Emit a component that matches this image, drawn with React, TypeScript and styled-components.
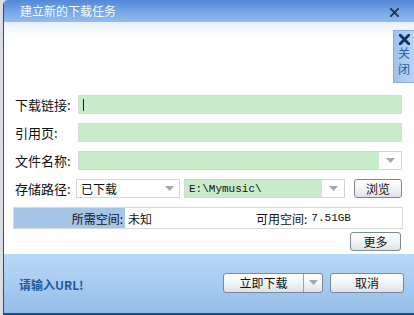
import React from 'react';
import styled, { createGlobalStyle } from 'styled-components';

const GlobalStyle = createGlobalStyle`
  html, body {
    margin: 0;
    padding: 0;
    background: #d9dee4;
    width: 414px;
    height: 315px;
    overflow: hidden;
  }
  * {
    box-sizing: border-box;
  }
`;

const cjk = `"Noto Sans CJK SC", "Liberation Sans", sans-serif`;
const mono = `"Liberation Mono", "DejaVu Sans Mono", monospace`;

function Arrow() {
  return (
    <svg width="9" height="5" viewBox="0 0 9 5">
      <path d="M0 0 H9 L4.5 5 Z" fill="#a3a7ad" />
    </svg>
  );
}

function CloseMark({ size, color, weight }: { size: number; color: string; weight: number }) {
  return (
    <svg width={size} height={size} viewBox="0 0 10 10">
      <path d="M1 1 L9 9 M9 1 L1 9" stroke={color} strokeWidth={weight} strokeLinecap="square" />
    </svg>
  );
}

export default function App() {
  return (
    <>
      <GlobalStyle />
      <Dialog>
        <TitleBar>
          <Title>建立新的下载任务</Title>
          <TitleClose>
            <CloseMark size={9} color="#1d2f4e" weight={2} />
          </TitleClose>
        </TitleBar>
        <Body>
          <SideTab>
            <CloseMark size={11} color="#13335f" weight={2.6} />
            <SideText>关</SideText>
            <SideText>闭</SideText>
          </SideTab>
          <Form>
            <Row>
              <Label>下载链接:</Label>
              <Field>
                <Caret />
              </Field>
            </Row>
            <Row>
              <Label>引用页:</Label>
              <Field />
            </Row>
            <Row>
              <Label>文件名称:</Label>
              <Combo>
                <Field />
                <DropBtn>
                  <Arrow />
                </DropBtn>
              </Combo>
            </Row>
            <Row>
              <Label>存储路径:</Label>
              <PathLine>
                <Select>
                  <SelectText>已下载</SelectText>
                  <Arrow />
                </Select>
                <Combo>
                  <Field>
                    <PathText>E:\Mymusic\</PathText>
                  </Field>
                  <DropBtn>
                    <Arrow />
                  </DropBtn>
                </Combo>
                <Button $w={48}>浏览</Button>
              </PathLine>
            </Row>
            <InfoBar>
              <InfoKey>所需空间:</InfoKey>
              <InfoValue>未知</InfoValue>
              <InfoFree>
                可用空间: <Mono>7.51GB</Mono>
              </InfoFree>
            </InfoBar>
            <MoreRow>
              <Rule />
              <Button $w={51}>更多</Button>
            </MoreRow>
          </Form>
        </Body>
        <Footer>
          <Hint>请输入URL!</Hint>
          <Actions>
            <SplitButton>
              <SplitMain>立即下载</SplitMain>
              <SplitArrow>
                <Arrow />
              </SplitArrow>
            </SplitButton>
            <Button $w={74} $h={20}>取消</Button>
          </Actions>
        </Footer>
      </Dialog>
    </>
  );
}

const Dialog = styled.div`
  margin-left: 3px;
  width: 411px;
  height: 315px;
  display: flex;
  flex-direction: column;
  border-left: 1px solid #274f86;
  border-bottom: 2px solid #1c4c8c;
  border-top-left-radius: 5px;
  overflow: hidden;
  background: #fff;
  font-family: ${cjk};
  font-size: 12px;
  color: #111;
`;

const TitleBar = styled.div`
  height: 22px;
  flex-shrink: 0;
  display: flex;
  align-items: center;
  justify-content: space-between;
  padding: 0 15px 0 16px;
  background: linear-gradient(#5488d6, #7aaae6 60%, #92bdf0);
`;

const Title = styled.div`
  color: #f4f8ff;
  font-size: 12px;
  line-height: 12px;
`;

const TitleClose = styled.div`
  display: flex;
  align-items: center;
  margin-top: 2px;
`;

const Body = styled.div`
  position: relative;
  height: 232px;
  flex-shrink: 0;
  padding: 73px 12px 0 12px;
  background: linear-gradient(#e6effa, #ffffff 14px);
`;

const SideTab = styled.div`
  position: absolute;
  right: 0;
  top: 8px;
  width: 21px;
  height: 53px;
  display: flex;
  flex-direction: column;
  align-items: center;
  padding-top: 3px;
  background: linear-gradient(90deg, #9ec3ee, #b7d4f4);
  border: 1px solid #86b0e2;
  border-right: none;
`;

const SideText = styled.span`
  color: #2a5d9f;
  font-size: 12px;
  line-height: 16px;
`;

const Form = styled.div`
  display: flex;
  flex-direction: column;
  gap: 9px;
`;

const Row = styled.div`
  display: grid;
  grid-template-columns: 62px 1fr;
  align-items: center;
  height: 19px;
`;

const Label = styled.div`
  font-size: 13px;
  color: #111;
  white-space: nowrap;
  margin-left: -1px;
`;

const Field = styled.div`
  flex: 1;
  height: 19px;
  display: flex;
  align-items: center;
  padding-left: 4px;
  background: #c8ebca;
  border: 1px solid #d6dcd6;
`;

const Caret = styled.div`
  width: 1px;
  height: 12px;
  background: #222;
`;

const Combo = styled.div`
  display: flex;
  height: 19px;
  border: 1px solid #d2d6da;
  flex: 1;
  & > ${Field} {
    border: none;
    height: 17px;
  }
`;

const DropBtn = styled.div`
  width: 22px;
  display: flex;
  align-items: center;
  justify-content: center;
  background: #fff;
`;

const PathLine = styled.div`
  display: flex;
  align-items: center;
  gap: 4px;
  margin-left: -2px;
`;

const Select = styled.div`
  width: 104px;
  height: 19px;
  display: flex;
  align-items: center;
  justify-content: space-between;
  padding: 0 5px 0 4px;
  border: 1px solid #d2d6da;
  background: #fff;
`;

const SelectText = styled.span`
  font-size: 12px;
`;

const PathText = styled.span`
  font-family: ${mono};
  font-size: 11px;
  color: #111;
`;

const Button = styled.div<{ $w: number; $h?: number }>`
  width: ${({ $w }) => $w}px;
  height: ${({ $h }) => $h ?? 19}px;
  flex-shrink: 0;
  display: flex;
  align-items: center;
  justify-content: center;
  margin-left: 5px;
  border: 1px solid #7b8898;
  border-radius: 3px;
  background: linear-gradient(#ffffff, #f2f4f7 50%, #dde2e9);
  font-size: 12px;
  color: #111;
`;

const InfoBar = styled.div`
  height: 22px;
  display: flex;
  align-items: center;
  border: 1px solid #d4d9de;
  margin-left: -3px;
  margin-right: -1px;
`;

const InfoKey = styled.div`
  width: 111px;
  height: 100%;
  display: flex;
  align-items: center;
  justify-content: flex-end;
  padding-right: 2px;
  background: #a4c4e8;
`;

const InfoValue = styled.div`
  width: 131px;
  padding-left: 3px;
`;

const InfoFree = styled.div`
  display: flex;
  align-items: center;
  gap: 4px;
`;

const Mono = styled.span`
  font-family: ${mono};
  font-size: 11px;
`;

const MoreRow = styled.div`
  display: flex;
  align-items: center;
  margin-top: -6px;
  margin-right: 1px;
`;

const Rule = styled.div`
  flex: 1;
  height: 1px;
  margin-right: 7px;
  background: #c9ced4;
  border-bottom: 1px solid #f4f6f8;
`;

const Footer = styled.div`
  flex: 1;
  display: flex;
  align-items: center;
  justify-content: space-between;
  padding: 0 10px 2px 15px;
  background: linear-gradient(#b9d8f7, #a6caef 55%, #95bce8);
`;

const Hint = styled.div`
  font-weight: bold;
  font-size: 12px;
  color: #1f5a9c;
  margin-top: 3px;
`;

const Actions = styled.div`
  display: flex;
  align-items: center;
  gap: 2px;
`;

const SplitButton = styled.div`
  width: 100px;
  height: 20px;
  display: flex;
  border: 1px solid #7b8898;
  border-radius: 3px;
  background: linear-gradient(#ffffff, #f2f4f7 50%, #dde2e9);
  overflow: hidden;
`;

const SplitMain = styled.div`
  flex: 1;
  display: flex;
  align-items: center;
  justify-content: center;
  font-size: 12px;
`;

const SplitArrow = styled.div`
  width: 19px;
  display: flex;
  align-items: center;
  justify-content: center;
  border-left: 1px solid #9aa5b2;
`;
